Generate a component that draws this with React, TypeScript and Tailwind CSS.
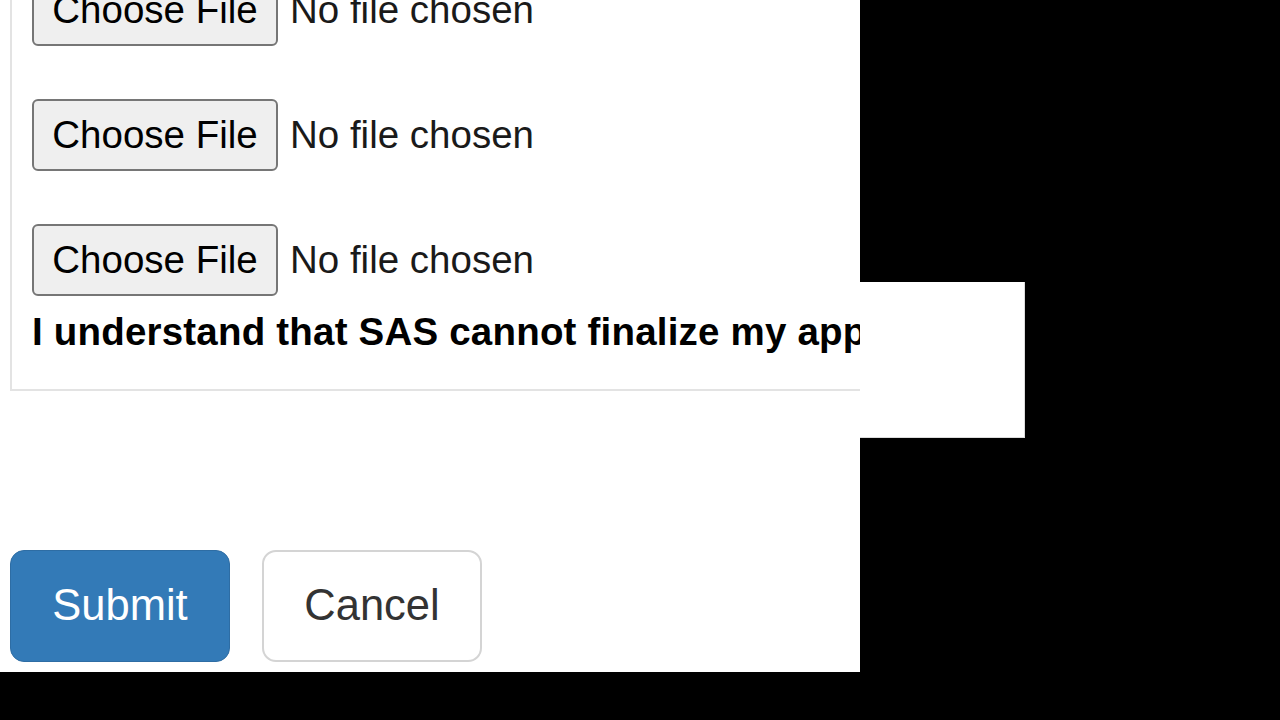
const fileRows = [1, 2, 3]

function FilePicker() {
  return (
    <div className="flex items-center h-[72px]">
      <div className="flex items-center justify-center w-[246px] h-[72px] rounded-[6px] border-2 border-[#767676] bg-[#efefef] text-[38.5px] text-black">
        Choose File
      </div>
      <span className="ml-[12px] text-[38.5px] text-[#1a1a1a]">No file chosen</span>
    </div>
  )
}

export default function App() {
  return (
    <div className="flex items-start w-[1280px] h-[720px] bg-black" style={{ fontFamily: '"Liberation Sans", Arial, sans-serif' }}>
      <div className="w-[860px] h-[672px] shrink-0 bg-white overflow-hidden px-[10px]">
        {/* attachments fieldset, scrolled so its top is out of view */}
        <div className="w-[1000px] border-l-2 border-b-2 border-[#e3e3e3] pl-[20px] pb-[35px]">
          <div className="flex flex-col gap-[53px] -mt-[26px]">
            {fileRows.map((n) => (
              <FilePicker key={n} />
            ))}
          </div>
          <p className="mt-[13px] leading-[45px] text-[38.5px] font-bold text-black whitespace-nowrap tracking-[0.2px]">
            I understand that SAS cannot finalize my application until all documents are received.
          </p>
        </div>

        <div className="flex gap-[32px] mt-[159px]">
          <button className="w-[220px] h-[112px] rounded-[14px] bg-[#337ab7] border border-[#2e6da4] text-white text-[43.5px]">
            Submit
          </button>
          <button className="w-[220px] h-[112px] rounded-[14px] bg-white border-2 border-[#d4d4d4] text-[#333] text-[43.5px]">
            Cancel
          </button>
        </div>
      </div>
      <div className="mt-[282px] w-[165px] h-[156px] bg-white border-r border-b border-[#dcdcdc]" />
    </div>
  )
}
